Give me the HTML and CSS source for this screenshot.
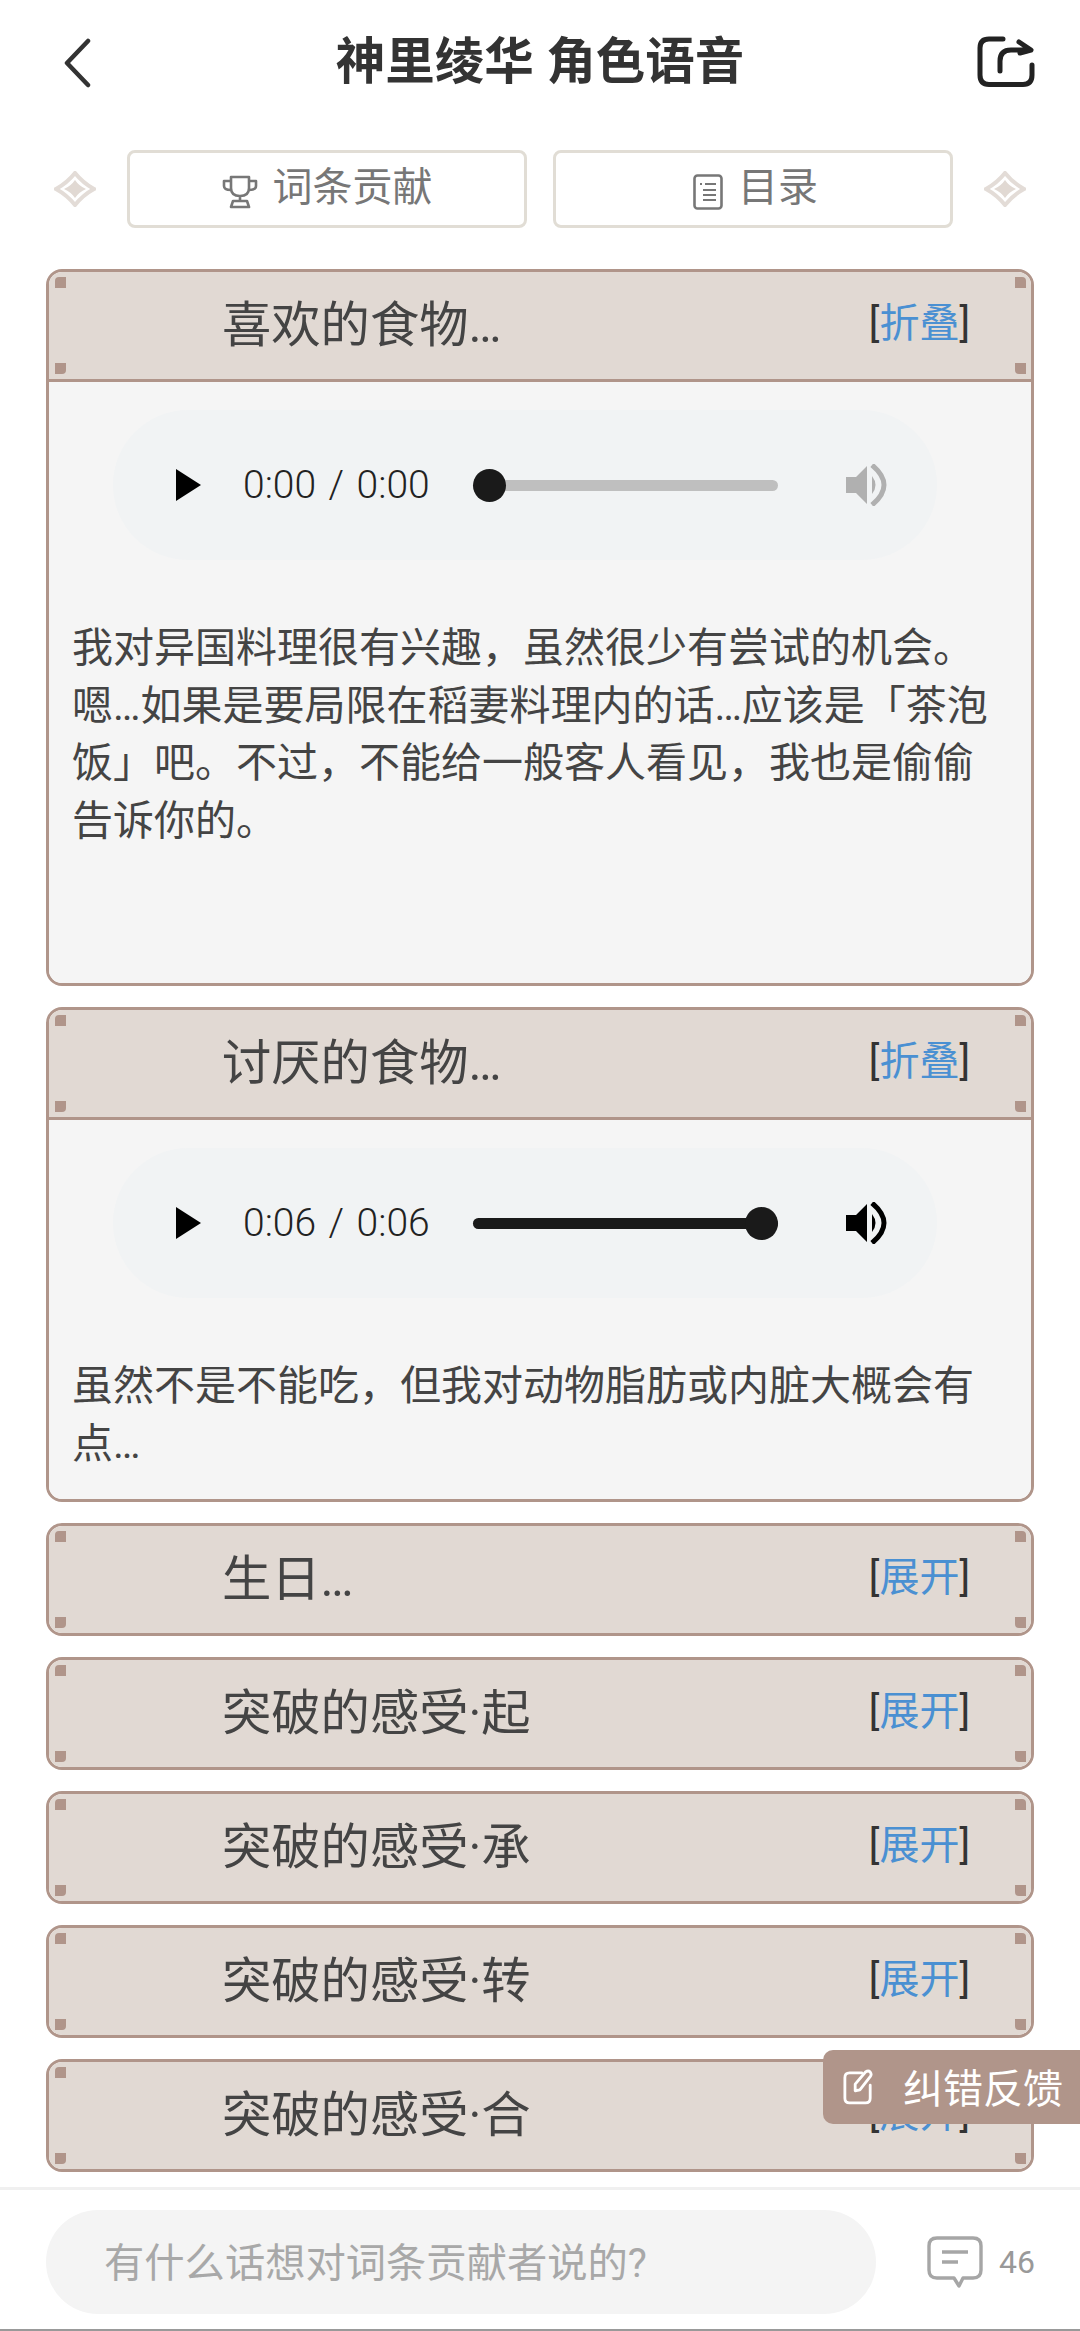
FILE: index.html
```html
<!DOCTYPE html>
<html lang="zh-CN">
<head>
  <meta charset="UTF-8">
  <meta name="viewport" content="width=device-width, initial-scale=1.0">
  <title>神里绫华 角色语音</title>
  <link rel="stylesheet" href="styles.css">
</head>
<body>
  <div id="page">
    <div class="topbar">
      <span class="top-icon">
        <svg width="30" height="50" viewBox="0 0 30 50"><path d="M26 3 L5 25 L26 47" fill="none" stroke="#333" stroke-width="4.5" stroke-linecap="round" stroke-linejoin="round"/></svg>
      </span>
      <h1 class="title">神里绫华 角色语音</h1>
      <span class="top-icon top-icon-right">
        <svg width="60" height="54" viewBox="0 0 60 54"><path d="M28 6 H14 Q5 6 5 15 V42 Q5 51.5 14 51.5 H48 Q57 51.5 57 42 V32" fill="none" stroke="#222" stroke-width="5" stroke-linecap="round"/><path d="M25 38 V28 Q25 17 36 17 H55 M44 9 L56 17 L45 20" fill="none" stroke="#222" stroke-width="5" stroke-linecap="round" stroke-linejoin="round"/></svg>
      </span>
    </div>

    <div class="tabs">
      <svg class="diamond" width="42" height="36" viewBox="0 0 42 36"><path d="M21 2 Q29 12 40 18 Q29 24 21 34 Q13 24 2 18 Q13 12 21 2 Z" fill="none" stroke="#e3dcd7" stroke-width="4"/><path d="M21 9 Q25 15 32 18 Q25 21 21 27 Q17 21 10 18 Q17 15 21 9 Z" fill="#e1d9d3"/></svg>
      <div class="tab-group">
        <a class="tab">
          <svg width="36" height="34" viewBox="0 0 36 34"><path d="M9 2 H27 V13 Q27 21 18 21 Q9 21 9 13 Z M9 6 H2 V11 Q2 15 9 15 M27 6 H34 V11 Q34 15 27 15 M18 21 V26 M11 26 H25 L27 32 H9 Z" fill="none" stroke="#777" stroke-width="2.6" stroke-linejoin="round"/></svg>
          <span>词条贡献</span>
        </a>
        <a class="tab tab-toc">
          <svg width="30" height="36" viewBox="0 0 30 36"><rect x="1.5" y="1.5" width="27" height="33" rx="3" fill="none" stroke="#777" stroke-width="2.6"/><path d="M7 10 H9 M12 10 H23 M10 16 H23 M10 21 H23 M10 26 H23" stroke="#777" stroke-width="2.2"/></svg>
          <span>目录</span>
        </a>
      </div>
      <svg class="diamond" width="42" height="36" viewBox="0 0 42 36"><path d="M21 2 Q29 12 40 18 Q29 24 21 34 Q13 24 2 18 Q13 12 21 2 Z" fill="none" stroke="#e3dcd7" stroke-width="4"/><path d="M21 9 Q25 15 32 18 Q25 21 21 27 Q17 21 10 18 Q17 15 21 9 Z" fill="#e1d9d3"/></svg>
    </div>

    <div class="cards">
      <div class="card">
        <div class="card-head">
          <i class="dot dot-tl"></i><i class="dot dot-tr"></i><i class="dot dot-bl"></i><i class="dot dot-br"></i>
          <span class="card-name">喜欢的食物…</span>
          <span class="toggle">[<b>折叠</b>]</span>
        </div>
        <div class="card-body card-body-tall">
          <div class="player">
            <svg class="play" width="25" height="32" viewBox="0 0 25 32"><path d="M0 0 L25 16 L0 32 Z"/></svg>
            <span class="time">0:00 / 0:00</span>
            <div class="track"><div class="track-fill" style="width: 0%"></div><div class="thumb" style="left: 0%"></div></div>
            <svg class="volume volume-off" width="43" height="42" viewBox="0 0 43 42"><path d="M0 13 H10 L21 2 V40 L10 29 H0 Z"/><path d="M26 1 Q50 21 26 41" fill="none" stroke="currentColor" stroke-width="5"/><path d="M26 12 Q33 21 26 30 Z"/></svg>
          </div>
          <p class="voice-text">我对异国料理很有兴趣，虽然很少有尝试的机会。嗯…如果是要局限在稻妻料理内的话…应该是「茶泡饭」吧。不过，不能给一般客人看见，我也是偷偷告诉你的。</p>
        </div>
      </div>

      <div class="card">
        <div class="card-head">
          <i class="dot dot-tl"></i><i class="dot dot-tr"></i><i class="dot dot-bl"></i><i class="dot dot-br"></i>
          <span class="card-name">讨厌的食物…</span>
          <span class="toggle">[<b>折叠</b>]</span>
        </div>
        <div class="card-body">
          <div class="player">
            <svg class="play" width="25" height="32" viewBox="0 0 25 32"><path d="M0 0 L25 16 L0 32 Z"/></svg>
            <span class="time">0:06 / 0:06</span>
            <div class="track track-on"><div class="track-fill" style="width: 100%"></div><div class="thumb" style="left: 100%"></div></div>
            <svg class="volume" width="43" height="42" viewBox="0 0 43 42"><path d="M0 13 H10 L21 2 V40 L10 29 H0 Z"/><path d="M26 1 Q50 21 26 41" fill="none" stroke="currentColor" stroke-width="5"/><path d="M26 12 Q33 21 26 30 Z"/></svg>
          </div>
          <p class="voice-text">虽然不是不能吃，但我对动物脂肪或内脏大概会有点…</p>
        </div>
      </div>

      <div class="card">
        <div class="card-head">
          <i class="dot dot-tl"></i><i class="dot dot-tr"></i><i class="dot dot-bl"></i><i class="dot dot-br"></i>
          <span class="card-name">生日…</span>
          <span class="toggle">[<b>展开</b>]</span>
        </div>
      </div>
      <div class="card">
        <div class="card-head">
          <i class="dot dot-tl"></i><i class="dot dot-tr"></i><i class="dot dot-bl"></i><i class="dot dot-br"></i>
          <span class="card-name">突破的感受·起</span>
          <span class="toggle">[<b>展开</b>]</span>
        </div>
      </div>
      <div class="card">
        <div class="card-head">
          <i class="dot dot-tl"></i><i class="dot dot-tr"></i><i class="dot dot-bl"></i><i class="dot dot-br"></i>
          <span class="card-name">突破的感受·承</span>
          <span class="toggle">[<b>展开</b>]</span>
        </div>
      </div>
      <div class="card">
        <div class="card-head">
          <i class="dot dot-tl"></i><i class="dot dot-tr"></i><i class="dot dot-bl"></i><i class="dot dot-br"></i>
          <span class="card-name">突破的感受·转</span>
          <span class="toggle">[<b>展开</b>]</span>
        </div>
      </div>
      <div class="card">
        <div class="card-head">
          <i class="dot dot-tl"></i><i class="dot dot-tr"></i><i class="dot dot-bl"></i><i class="dot dot-br"></i>
          <span class="card-name">突破的感受·合</span>
          <span class="toggle">[<b>展开</b>]</span>
        </div>
      </div>
    </div>

    <div class="bottom-bar">
      <div class="comment-input">有什么话想对词条贡献者说的?</div>
      <div class="comment-count">
        <svg width="56" height="52" viewBox="0 0 56 52"><path d="M10 2 H46 Q54 2 54 10 V34 Q54 42 46 42 H36 L32 50 L27 42 H10 Q2 42 2 34 V10 Q2 2 10 2 Z" fill="none" stroke="#a6a6a6" stroke-width="3.4" stroke-linejoin="round"/><path d="M15 16 H41 M15 26 H31" stroke="#a6a6a6" stroke-width="3.4"/></svg>
        <span>46</span>
      </div>
    </div>

    <div class="feedback">
      <svg width="30" height="38" viewBox="0 0 32 38"><path d="M20 4 H7 Q2 4 2 9 V31 Q2 36 7 36 H24 Q29 36 29 31 V17" fill="none" stroke="#fff" stroke-width="3" stroke-linecap="round"/><path d="M13 23 L13 16 L24 3 Q27 1 29 3 Q31 6 29 8 L18 22 Z" fill="none" stroke="#fff" stroke-width="3" stroke-linejoin="round"/></svg>
      <span>纠错反馈</span>
    </div>
  </div>
</body>
</html>
```

FILE: styles.css
```css
* {
  box-sizing: border-box;
}
body {
  margin: 0;
  background-color: white;
  font-family: Roboto, "Noto Sans CJK SC", sans-serif;
  color: #444;
}
#page {
  position: relative;
  width: 1080px;
  height: 2331px;
  overflow: hidden;
  display: flex;
  flex-direction: column;
  border-bottom: 2px solid #999;
}

.topbar {
  height: 120px;
  padding: 0 45px;
  display: flex;
  align-items: center;
  justify-content: space-between;
}
.top-icon {
  width: 60px;
  display: flex;
  padding-left: 17px;
  margin-top: 6px;
}
.top-icon-right {
  padding-left: 0;
  margin-top: 0;
  justify-content: flex-end;
}
.title {
  margin: -6px 0 0;
  font-size: 49.5px;
  font-weight: 700;
  color: #333;
}

.tabs {
  margin-top: 30px;
  padding: 0 54px;
  display: flex;
  align-items: center;
  justify-content: space-between;
}
.tab-group {
  display: flex;
  gap: 26px;
}
.tab {
  width: 400px;
  height: 78px;
  border: 3px solid #e1ddd5;
  border-radius: 8px;
  display: flex;
  align-items: center;
  justify-content: center;
  gap: 15px;
  font-size: 40px;
  color: #777;
}
.tab-toc {
  padding-left: 5px;
}
.tab svg {
  margin-top: 6px;
}
.tab span {
  margin-top: -10px;
}

.cards {
  margin-top: 41px;
  padding: 0 46px;
  display: flex;
  flex-direction: column;
  gap: 21px;
}
.card {
  border: 3px solid #b0958a;
  border-radius: 16px;
  overflow: hidden;
}
.card-head {
  position: relative;
  height: 107px;
  padding: 0 61px 11px 173px;
  background-color: #e1d9d3;
  display: flex;
  align-items: center;
  justify-content: space-between;
}
.card-name {
  font-size: 49.3px;
  color: #444;
}
.toggle {
  font-size: 40px;
  color: #333;
}
.toggle b {
  font-weight: 400;
  color: #4a90d2;
}
.dot {
  position: absolute;
  width: 11px;
  height: 11px;
  background-color: #b0958a;
}
.dot-tl {
  top: 5px;
  left: 6px;
  border-top-left-radius: 4px;
}
.dot-tr {
  top: 5px;
  right: 5px;
  border-top-right-radius: 4px;
}
.dot-bl {
  bottom: 5px;
  left: 6px;
  border-bottom-right-radius: 4px;
}
.dot-br {
  bottom: 5px;
  right: 5px;
  border-bottom-left-radius: 4px;
}

.card-body {
  border-top: 3px solid #b0958a;
  background-color: #f5f5f5;
  padding: 28px 21px 26px 23px;
}
.card-body-tall {
  padding-bottom: 133px;
}
.player {
  width: 824px;
  height: 150px;
  margin-left: 41px;
  padding: 0 46px 0 63px;
  border-radius: 75px;
  background-color: #f1f3f4;
  display: flex;
  align-items: center;
}
.play {
  fill: black;
}
.time {
  margin-left: 42px;
  width: 230px;
  font-size: 39px;
  font-weight: 300;
  word-spacing: 3px;
  color: #222;
}
.track {
  position: relative;
  width: 305px;
  height: 11px;
  border-radius: 6px;
  background-color: #bfbfbf;
}
.track-fill {
  height: 100%;
  border-radius: 6px;
  background-color: #1a1a1a;
}
.thumb {
  position: absolute;
  top: -11px;
  width: 33px;
  height: 33px;
  border-radius: 50%;
  background-color: #1a1a1a;
}
.track-on .thumb {
  margin-left: -33px;
}
.volume {
  margin-left: 68px;
  color: black;
  fill: currentColor;
}
.volume-off {
  color: #b0b0b0;
}
.voice-text {
  margin: 60px 0 0;
  font-size: 41px;
  line-height: 57.5px;
  color: #444;
}

.bottom-bar {
  position: absolute;
  left: 0;
  right: 0;
  bottom: 0;
  height: 142px;
  padding: 20px 40px 0 46px;
  border-top: 3px solid #f0f0f0;
  background-color: white;
  display: flex;
  gap: 51px;
}
.comment-input {
  flex-shrink: 0;
  width: 830px;
  height: 104px;
  padding: 0 0 6px 58px;
  border-radius: 52px;
  background-color: #f4f4f4;
  display: flex;
  align-items: center;
  font-size: 40.3px;
  color: #a8a8a8;
}
.comment-count {
  display: flex;
  align-items: center;
  gap: 16px;
  height: 104px;
  font-size: 32px;
  color: #999;
}

.feedback {
  position: absolute;
  top: 2050px;
  left: 823px;
  right: 0;
  height: 74px;
  padding: 0 0 2px 20px;
  border-radius: 10px 0 0 10px;
  background-color: #b0958a;
  display: flex;
  align-items: center;
  gap: 30px;
  font-size: 40px;
  color: white;
}
.feedback svg {
  margin-top: 2px;
}
```
